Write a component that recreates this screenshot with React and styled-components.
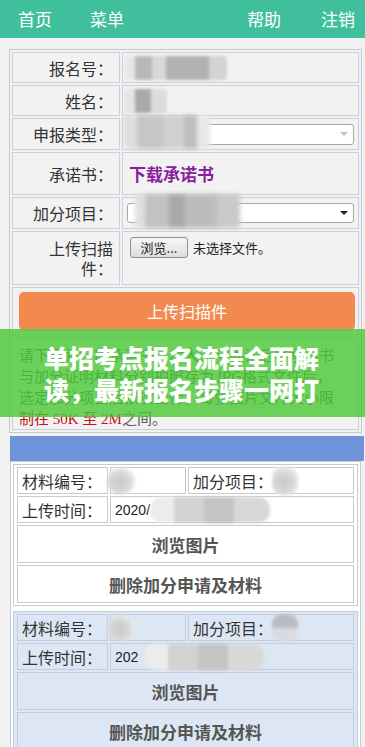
import React from 'react';
import styled, { createGlobalStyle } from 'styled-components';

const GlobalStyle = createGlobalStyle`
  html, body {
    margin: 0;
    padding: 0;
    background: #f1f1f1;
  }
  body {
    font-family: "Noto Sans CJK SC", "Noto Sans", sans-serif;
    color: #333;
  }
  * {
    box-sizing: border-box;
  }
`;

const Page = styled.div`
  position: relative;
  width: 365px;
  min-height: 747px;
  overflow: hidden;
  padding-bottom: 20px;
`;

const NavBar = styled.div`
  height: 38px;
  background: #40bf9d;
  display: flex;
  align-items: center;
  padding: 0 10px 0 18px;
`;

const NavLink = styled.a`
  color: #fff;
  font-size: 17px;
  line-height: 38px;
  text-decoration: none;
  margin-right: ${p => p.$gap || 0}px;
`;

const NavSpacer = styled.div`
  flex: 1;
`;

const Form = styled.div`
  margin: 11px 3px 0 9px;
  border: 1px solid #c3cbd6;
  padding: 2px;
  display: grid;
  grid-template-columns: 108px 237px;
  grid-template-rows: 31px 31px 32px 43px 32px 54px 48px 93px;
  gap: 2px;
`;

const Cell = styled.div`
  border: 1px solid #c9d1dc;
  background: #f2f2f2;
  display: flex;
  align-items: center;
  position: relative;
  grid-column: ${p => (p.$span ? '1 / -1' : 'auto')};
`;

const Label = styled(Cell)`
  justify-content: flex-end;
  text-align: right;
  padding: 0 6px;
  font-size: 16px;
  line-height: 20px;
  color: #333;
`;

const Value = styled(Cell)`
  padding: ${p => p.$pad || '0 4px'};
  align-items: ${p => p.$top ? 'flex-start' : 'center'};
`;

const Blur = styled.span`
  display: inline-block;
  flex: none;
  width: ${p => p.$w}px;
  height: ${p => p.$h}px;
  margin-left: ${p => p.$ml || 0}px;
  background: ${p => p.$bg};
  filter: blur(1.6px);
  border-radius: ${p => p.$r || 3}px;
`;

const SelectBox = styled.div`
  position: relative;
  flex: 1;
  height: ${p => p.$h}px;
  background: #fff;
  border: 1px solid #a9a9a9;
  border-radius: 3px;
`;

const SelectArrow = styled.span`
  position: absolute;
  right: 5px;
  top: 50%;
  margin-top: -2px;
  width: 0;
  height: 0;
  border-left: 4px solid transparent;
  border-right: 4px solid transparent;
  border-top: 4px solid ${p => p.$color};
`;

const BlurOver = styled.span`
  position: absolute;
  left: ${p => p.$x}px;
  top: ${p => p.$y}px;
  width: ${p => p.$w}px;
  height: ${p => p.$h}px;
  background: ${p => p.$bg};
  filter: blur(2px);
  border-radius: 4px;
`;

const DownloadLink = styled.a`
  color: #8a1f9e;
  font-weight: 700;
  font-size: 17px;
  text-decoration: none;
  padding-left: 2px;
`;

const FileButton = styled.button`
  width: 58px;
  height: 21px;
  padding: 0;
  border: 1px solid #8f8f8f;
  border-radius: 3px;
  background: linear-gradient(#f7f7f7, #dedede);
  font-family: inherit;
  font-size: 13px;
  color: #222;
`;

const FileText = styled.span`
  font-size: 13px;
  line-height: 21px;
  margin-left: 5px;
  color: #222;
`;

const ButtonCell = styled(Cell)`
  padding: 0 3px 0 6px;
`;

const UploadButton = styled.button`
  width: 100%;
  height: 38px;
  border: none;
  border-radius: 5px;
  background: #f28a4f;
  box-shadow: 0 2px 1px rgba(0, 0, 0, 0.12);
  color: #fff;
  font-family: inherit;
  font-size: 16px;
`;

const NoteCell = styled(Cell)`
  display: block;
  padding: 6px 0 0 6px;
`;

const Note = styled.p`
  margin: 0;
  width: 318px;
  font-size: 15px;
  line-height: 21px;
  color: #5a5a5a;
`;

const Red = styled.span`
  color: #c8101a;
  font-family: "Liberation Serif", "Noto Sans CJK SC", serif;
`;

const Section = styled.div`
  margin: 3px 0 0 10px;
  width: 351px;
`;

const SectionHead = styled.div`
  height: 25px;
  margin-right: -3px;
  background: #6f93d8;
`;

const SectionBody = styled.div`
  border: 1px solid #c5ccd6;
  padding: 2px;
  background: #fff;
`;

const Material = styled.div`
  margin-top: ${p => p.$mt || 0}px;
  border: 1px solid ${p => (p.$alt ? '#c3ccd9' : '#cacaca')};
  background: ${p => (p.$alt ? '#dde6f4' : '#fff')};
  padding: 2px 3px;
  display: grid;
  grid-template-columns: 91px 76px 91px 1fr;
  grid-template-rows: 27px 27px 38px 38px;
  gap: 2px;
`;

const MCell = styled.div`
  border: 1px solid ${p => (p.$alt ? '#c3ccd9' : '#cacaca')};
  display: flex;
  align-items: center;
  padding-left: 4px;
  font-size: 16px;
  color: #333;
  overflow: visible;
  grid-column: ${p => p.$col || 'auto'};
`;

const DateText = styled.span`
  font-family: "Liberation Sans", sans-serif;
  font-size: 14px;
  color: #222;
`;

const Action = styled(MCell)`
  justify-content: center;
  padding-left: 0;
  font-size: 17px;
  font-weight: 700;
  color: #555;
`;

const Banner = styled.div`
  position: absolute;
  left: 0;
  right: 0;
  top: 329px;
  height: 88px;
  padding-top: 12px;
  background: rgba(72, 200, 52, 0.8);
`;

const BannerText = styled.div`
  width: 277px;
  margin: 0 auto;
  height: 64px;
  overflow: hidden;
  color: #fff;
  font-size: 25px;
  line-height: 32px;
  font-weight: 900;
`;

const blob1 = 'linear-gradient(90deg,#e6e6e6 0 10%,#b8b8b8 10% 26%,#d8d8d8 26% 40%,#b1b1b1 40% 82%,#d4d4d4 82% 100%)';
const blob2 = 'linear-gradient(90deg,#e4e4e4 0 25%,#a9a9a9 25% 62%,#dcdcdc 62% 100%)';
const blob3 = 'linear-gradient(90deg,#dedede 0 15%,#c6c6c6 15% 45%,#d0d0d0 45% 70%,#bdbdbd 70% 85%,#e8e8e8 85% 100%)';
const blob5 = 'linear-gradient(90deg,#e0e0e0 0 10%,#c2c2c2 10% 32%,#a9a9a9 32% 48%,#bcbcbc 48% 78%,#c9c9c9 78% 100%)';
const roundBlob = 'radial-gradient(circle at 45% 55%,#c9c9c9 0,#d6d6d6 45%,#ececec 75%)';
const dateBlob = 'linear-gradient(90deg,#ececec 0 20%,#d2d2d2 20% 45%,#c4c4c4 45% 70%,#d8d8d8 70% 100%)';

function MaterialTable({ alt, mt, date }) {
  return (
    <Material $alt={alt} $mt={mt}>
      <MCell $alt={alt}>材料编号：</MCell>
      <MCell $alt={alt}>
        <Blur $w={28} $h={26} $ml={-8} $r={14} $bg={roundBlob} />
      </MCell>
      <MCell $alt={alt}>加分项目：</MCell>
      <MCell $alt={alt}>
        <Blur $w={26} $h={28} $ml={-14} $r={10} $bg={alt ? 'linear-gradient(#b9bcc4 0 50%,#d8dbe2 50%)' : roundBlob} />
      </MCell>
      <MCell $alt={alt}>上传时间：</MCell>
      <MCell $alt={alt} $col="2 / -1">
        <DateText>{date}</DateText>
        <Blur $w={120} $h={26} $ml={alt ? 6 : 0} $r={12} $bg={dateBlob} />
      </MCell>
      <Action $alt={alt} $col="1 / -1">浏览图片</Action>
      <Action $alt={alt} $col="1 / -1">删除加分申请及材料</Action>
    </Material>
  );
}

export default function App() {
  return (
    <Page>
      <GlobalStyle />
      <NavBar>
        <NavLink $gap={38}>首页</NavLink>
        <NavLink>菜单</NavLink>
        <NavSpacer />
        <NavLink $gap={40}>帮助</NavLink>
        <NavLink>注销</NavLink>
      </NavBar>

      <Form>
        <Label>报名号：</Label>
        <Value $pad="0 2px">
          <Blur $w={102} $h={24} $bg={blob1} />
        </Value>

        <Label>姓名：</Label>
        <Value $pad="0 2px">
          <Blur $w={42} $h={24} $bg={blob2} />
        </Value>

        <Label>申报类型：</Label>
        <Value $pad="0 4px">
          <SelectBox $h={21}>
            <SelectArrow $color="#c4c4c4" />
          </SelectBox>
          <BlurOver $x={1} $y={-4} $w={86} $h={34} $bg={blob3} />
        </Value>

        <Label>承诺书：</Label>
        <Value $pad="0 4px">
          <DownloadLink>下载承诺书</DownloadLink>
        </Value>

        <Label>加分项目：</Label>
        <Value $pad="0 4px">
          <SelectBox $h={20}>
            <SelectArrow $color="#222" />
          </SelectBox>
          <BlurOver $x={12} $y={-4} $w={105} $h={34} $bg={blob5} />
        </Value>

        <Label>上传扫描件：</Label>
        <Value $top $pad="5px 7px">
          <FileButton>浏览...</FileButton>
          <FileText>未选择文件。</FileText>
        </Value>

        <ButtonCell $span>
          <UploadButton>上传扫描件</UploadButton>
        </ButtonCell>

        <NoteCell $span>
          <Note>
            请下载并打印承诺书，本人签字确认后将承诺书与加分证明材料分别拍照存为JPG格式文件后，选定加分项目后依次上传，每张图片文件大小限
            <Red>制在 50K 至 2M</Red>之间。
          </Note>
        </NoteCell>
      </Form>

      <Section>
        <SectionHead />
        <SectionBody>
          <MaterialTable date="2020/" />
          <MaterialTable alt mt={5} date="202" />
        </SectionBody>
      </Section>

      <Banner>
        <BannerText>单招考点报名流程全面解读，最新报名步骤一网打尽</BannerText>
      </Banner>
    </Page>
  );
}
